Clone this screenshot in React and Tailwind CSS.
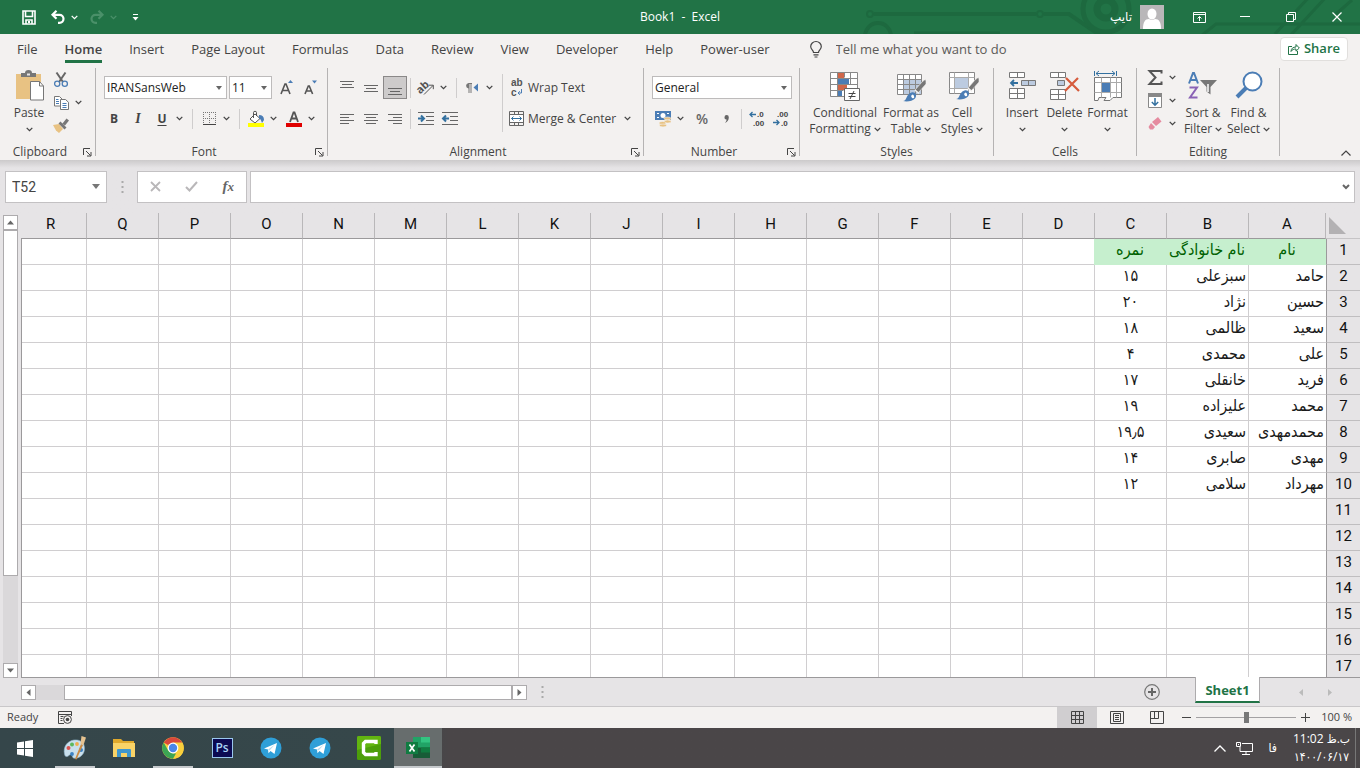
import { useState } from "react";

const TABS = [
  "File",
  "Home",
  "Insert",
  "Page Layout",
  "Formulas",
  "Data",
  "Review",
  "View",
  "Developer",
  "Help",
  "Power-user",
];

const COLUMNS = "ABCDEFGHIJKLMNOPQR".split("");
const ROW_COUNT = 17;

const ROWS = [
  ["نام", "نام خانوادگی", "نمره"],
  ["حامد", "سبزعلی", "۱۵"],
  ["حسین", "نژاد", "۲۰"],
  ["سعید", "ظالمی", "۱۸"],
  ["علی", "محمدی", "۴"],
  ["فرید", "خانقلی", "۱۷"],
  ["محمد", "علیزاده", "۱۹"],
  ["محمدمهدی", "سعیدی", "۱۹٫۵"],
  ["مهدی", "صابری", "۱۴"],
  ["مهرداد", "سلامی", "۱۲"],
];

const Svg = ({ w, h, children, className = "" }) => (
  <svg
    width={w}
    height={h}
    viewBox={`0 0 ${w} ${h}`}
    fill="none"
    className={`shrink-0 overflow-visible ${className}`}
    aria-hidden="true"
  >
    {children}
  </svg>
);

const Chevron = ({ className = "" }) => (
  <Svg w={7} h={5} className={className}>
    <path d="M0.7 0.9 3.5 3.6 6.3 0.9" stroke="currentColor" strokeWidth="1.3" />
  </Svg>
);

const Caret = ({ className = "" }) => (
  <Svg w={6} h={4} className={className}>
    <path d="M0 0h6L3 4z" fill="#666" />
  </Svg>
);

const Tool = ({ label, children, className = "w-6" }) => (
  <button
    type="button"
    aria-label={label}
    className={`flex h-[23px] items-center justify-center ${className}`}
  >
    {children}
  </button>
);

const More = ({ label }) => (
  <Tool label={label} className="w-[11px]">
    <Chevron />
  </Tool>
);

const Divider = ({ className = "mx-[5px]" }) => (
  <span className={`h-5 w-px shrink-0 bg-[#cfcdcd] ${className}`} />
);

const Group = ({ title, launcher, className, children }) => (
  <>
    <section className={`flex shrink-0 flex-col ${className}`}>
      <div className="flex flex-1">{children}</div>
      <div className="flex h-4 items-center">
        <h2 className="flex-1 text-center text-xs leading-4">{title}</h2>
        {launcher && (
          <button type="button" aria-label={`${title} settings`} className="w-[15px]">
            <Svg w={9} h={9} className="mx-auto">
              <path d="M0.500 7V0.500H7M3 3l4.500 4.500M8 4v4H4" stroke="#444" />
            </Svg>
          </button>
        )}
      </div>
    </section>
    <span className="my-1 w-px shrink-0 bg-[#b5b3b3]" />
  </>
);

const BigButton = ({ icon, lines, className, chevronBelow }) => (
  <button
    type="button"
    className={`flex flex-col items-center pt-[6px] text-xs leading-4 whitespace-nowrap ${className}`}
  >
    <span className="flex h-[35px] items-start">{icon}</span>
    <span>{lines[0]}</span>
    {chevronBelow ? (
      <span className="flex h-4 items-center">
        <Chevron />
      </span>
    ) : (
      <span className="flex items-center gap-[3px]">
        {lines[1]}
        <Chevron />
      </span>
    )}
  </button>
);

const Lines = ({ rows }) => (
  <Svg w={14} h={14}>
    {rows.map(([x, y, w]) => (
      <path key={y} d={`M${x} ${y}.5h${w}`} stroke="#666" />
    ))}
  </Svg>
);

const TitleBar = () => (
  <header className="relative grid h-[34px] shrink-0 grid-cols-[1fr_auto_1fr] items-center overflow-hidden bg-[#217346] text-white">
    <svg
      className="absolute top-0 right-0"
      width="510"
      height="34"
      viewBox="0 0 510 34"
      fill="none"
      stroke="#1d693f"
      aria-hidden="true"
    >
      <path d="M24 14h162M194 14h25l32 22" strokeWidth="4" />
      <circle cx="20" cy="14" r="3" strokeWidth="2" />
      <circle cx="190" cy="14" r="3" strokeWidth="2" />
      <circle cx="28" cy="36" r="13" strokeWidth="4" />
      <path d="M64 33h86" strokeWidth="3" />
      <circle cx="256" cy="9" r="23" strokeWidth="5" />
      <circle cx="256" cy="9" r="9" strokeWidth="7" />
      <path d="M351 36l15-12h144M425 34l35-38M440 36l37-40M486 14l16-14" strokeWidth="3" />
    </svg>
    <div className="relative flex items-center pl-[22px]">
      <button type="button" aria-label="Save">
        <Svg w={14} h={15}>
          <path d="M1 1h12v13H1zM3.500 1v5.500h7V1M4 14v-4h6v4" stroke="#fff" strokeWidth="1.600" />
          <path d="M6 11h2v2H6z" fill="#fff" />
        </Svg>
      </button>
      <button type="button" aria-label="Undo" className="ml-[15px] flex items-center gap-[6px]">
        <Svg w={14} h={14}>
          <path d="M5.500 0.800 1.500 4.800l4 4M1.800 4.800h6.700a4 4 0 0 1 0 8H7" stroke="#fff" strokeWidth="2.200" />
        </Svg>
        <Chevron />
      </button>
      <button type="button" aria-label="Redo" className="ml-3 flex items-center gap-[6px] text-[#4a9069]">
        <Svg w={14} h={14}>
          <path d="M8.500 0.800l4 4-4 4M12.200 4.800H5.500a4 4 0 0 0 0 8H7" stroke="#4a9069" strokeWidth="2.200" />
        </Svg>
        <Chevron />
      </button>
      <button type="button" aria-label="Customize toolbar" className="ml-[15px]">
        <Svg w={7} h={7}>
          <path d="M1 0.500h5" stroke="#fff" />
          <path d="M0.500 3h6l-3 3.500z" fill="#fff" />
        </Svg>
      </button>
    </div>
    <h1 className="relative text-xs whitespace-pre">Book1  -  Excel</h1>
    <div className="relative flex items-center justify-end">
      <span className="mr-2 font-['DejaVu_Sans'] text-xs" dir="rtl">
        تایپ
      </span>
      <Svg w={24} h={24} className="mr-3">
        <path d="M0 0h24v24H0z" fill="#b9b7b9" />
        <ellipse cx="12" cy="9" rx="4.500" ry="5.500" fill="#fff" />
        <path d="M3 24c0-7 2-10 6-10q3 2 6 0c4 0 6 3 6 10z" fill="#fff" />
      </Svg>
      <button type="button" aria-label="Ribbon options" className="flex w-[46px] justify-center">
        <Svg w={13} h={11}>
          <path d="M0.500 0.500h12v10H0.500zM0.500 2.500h12M6.500 9V4.500M4.500 6.500l2-2 2 2" stroke="#fff" />
        </Svg>
      </button>
      <button type="button" aria-label="Minimize" className="flex w-[46px] justify-center">
        <Svg w={10} h={10}>
          <path d="M0 4.500h10" stroke="#fff" />
        </Svg>
      </button>
      <button type="button" aria-label="Restore" className="flex w-[46px] justify-center">
        <Svg w={10} h={10}>
          <path d="M0.500 2.500h7v7h-7zM2.500 2.500v-2h7v7h-2" stroke="#fff" />
        </Svg>
      </button>
      <button type="button" aria-label="Close" className="flex w-[46px] justify-center">
        <Svg w={10} h={10}>
          <path d="M0.500 0.500l9 9M9.500 0.500l-9 9" stroke="#fff" strokeWidth="1.200" />
        </Svg>
      </button>
    </div>
  </header>
);

const TabStrip = () => {
  const [active, setActive] = useState("Home");
  return (
    <nav className="flex h-[30px] shrink-0 items-center pr-3 pl-[17px] text-[13px] whitespace-nowrap">
      <div className="flex gap-[27px]">
        {TABS.map((tab) => (
          <button
            key={tab}
            type="button"
            onClick={() => setActive(tab)}
            className={
              tab === active
                ? "border-b-[3px] border-[#217346] pt-[3px] font-semibold leading-[22px]"
                : "border-b-[3px] border-transparent pt-[3px] leading-[22px]"
            }
          >
            {tab}
          </button>
        ))}
      </div>
      <Svg w={12} h={17} className="ml-10">
        <path
          d="M3.500 11.500C3.500 9 0.700 8.500 0.700 5.500a5.300 5 0 0 1 10.600 0c0 3-2.800 3.500-2.800 6zM3.500 13.800h5M4.500 16h3"
          stroke="#444"
          strokeWidth="1.200"
        />
      </Svg>
      <input
        aria-label="Tell me what you want to do"
        placeholder="Tell me what you want to do"
        className="ml-[14px] min-w-0 flex-1 bg-transparent pt-0.5 outline-none placeholder:text-[#5c5a58]"
      />
      <button
        type="button"
        className="flex h-6 items-center gap-1 rounded-sm border border-[#e1dfdd] bg-white px-[7px] font-semibold text-[#217346]"
      >
        <Svg w={12} h={12}>
          <path d="M4 3.500H0.500v8h9V8M3 8.500c0-3 2-4.500 5-4.500V1.500L11.300 5 8 8.200V6C6 6 4 6.500 3 8.500z" stroke="#217346" />
        </Svg>
        Share
      </button>
    </nav>
  );
};

const Dropdown = ({ label, value, className }) => (
  <div className={`relative flex h-[23px] items-center border border-[#bdbbbb] bg-white ${className}`}>
    <select
      aria-label={label}
      className="h-full w-full appearance-none bg-transparent pl-0.5 text-xs text-[#222] outline-none"
    >
      <option>{value}</option>
    </select>
    <Caret className="pointer-events-none absolute right-1" />
  </div>
);

const ClipboardGroup = () => (
  <Group title="Clipboard" launcher className="w-[95px]">
    <BigButton
      className="ml-3 w-[34px]"
      lines={["Paste"]}
      chevronBelow
      icon={
        <Svg w={28} h={31} className="ml-0.5">
          <path d="M0 4h25v25H0z" fill="#e8c283" />
          <path d="M5 7V3h4a3.500 3 0 0 1 7 0h4v4z" fill="#777" />
          <path d="M11 3.500h3v2h-3z" fill="#e8e6e6" />
          <path d="M14.500 11.500h9l4 4.500v14h-13z" fill="#fff" stroke="#777" />
          <path d="M23.500 11.500V16h4" stroke="#777" />
        </Svg>
      }
    />
    <div className="ml-[3px] flex flex-col pt-1">
      <Tool label="Cut">
        <Svg w={14} h={15}>
          <path d="M2.500 0.500l6.500 9.500M11.500 0.500L5 10" stroke="#666" strokeWidth="2" />
          <circle cx="3.200" cy="11.700" r="2.600" stroke="#4b7db5" strokeWidth="1.300" />
          <circle cx="10.800" cy="11.700" r="2.600" stroke="#4b7db5" strokeWidth="1.300" />
        </Svg>
      </Tool>
      <div className="flex">
        <Tool label="Copy">
          <Svg w={15} h={14}>
            <path d="M0.500 0.500h5l2.500 2.500v7H0.500z" fill="#fff" stroke="#777" />
            <path d="M6.500 3.500h5l3 2.800v7.200h-8z" fill="#fff" stroke="#777" />
            <path d="M2 3.500h2.500M2 5.500h3M2 7.500h3M8.500 7.500h4M8.500 9.500h4M8.500 11.500h4" stroke="#4b7db5" />
          </Svg>
        </Tool>
        <More label="Copy options" />
      </div>
      <Tool label="Format painter">
        <Svg w={16} h={15}>
          <path d="M0 7l6-1 4 5-4 4-3-2.500z" fill="#e8c283" />
          <path d="M5.500 5.500l2-2 6 6-2 2zM9.500 5.500l4-5 2.500 2-4 5z" fill="#777" />
        </Svg>
      </Tool>
    </div>
  </Group>
);

const FontGroup = () => (
  <Group title="Font" launcher className="w-[231px]">
    <div className="flex flex-col gap-2 pt-3 pl-1.5">
      <div className="flex pl-0.5">
        <Dropdown label="Font" value="IRANSansWeb" className="w-[123px]" />
        <Dropdown label="Font size" value="11" className="ml-0.5 w-[43px]" />
        <Tool label="Increase font size" className="ml-0.5 w-6">
          <Svg w={13} h={15}>
            <path d="M1 14L5 4h1l4 10M2.500 10.500h6" stroke="#555" strokeWidth="1.600" />
            <path d="M8 3l2.500-3L13 3z" fill="#4b7db5" />
          </Svg>
        </Tool>
        <Tool label="Decrease font size">
          <Svg w={13} h={15}>
            <path d="M1 14L4.300 6h1L8.600 14M2.500 11h4.800" stroke="#555" strokeWidth="1.600" />
            <path d="M8 0.500l2.500 3L13 0.500z" fill="#4b7db5" />
          </Svg>
        </Tool>
      </div>
      <div className="flex items-center">
        <Tool label="Bold">
          <span className="text-xs font-bold">B</span>
        </Tool>
        <Tool label="Italic">
          <span className="font-['Liberation_Serif'] text-sm font-bold italic">I</span>
        </Tool>
        <Tool label="Underline">
          <span className="text-xs font-bold underline underline-offset-2">U</span>
        </Tool>
        <More label="Underline options" />
        <Divider className="mr-1 ml-[7px]" />
        <Tool label="Borders">
          <Svg w={13} h={13}>
            <path d="M0.500 0v12M6.500 0v12M12.500 0v12M0 0.500h13M0 6.500h13" stroke="#777" strokeDasharray="1 1" />
            <path d="M0 12.500h13" stroke="#444" />
          </Svg>
        </Tool>
        <More label="Border options" />
        <Divider className="mr-1 ml-[7px]" />
        <Tool label="Fill color">
          <Svg w={16} h={16}>
            <path d="M2 8l5-5 5 4.500-5 4.500z" fill="#fff" stroke="#555" />
            <path d="M5.500 7V1.500a1.500 1.200 0 0 1 3 0V5" stroke="#555" />
            <path d="M11 4q5 0 5 5l-2 3q-1-4-3-5z" fill="#4b7db5" />
            <path d="M0 12h16v4H0z" fill="#ff0" />
          </Svg>
        </Tool>
        <More label="Fill options" />
        <Tool label="Font color" className="ml-[3px] w-6">
          <Svg w={16} h={16}>
            <path d="M4 11L7.500 1.500h1L12 11M5.300 7.500h5.400" stroke="#555" strokeWidth="1.800" />
            <path d="M0 12h16v4H0z" fill="#e00000" />
          </Svg>
        </Tool>
        <More label="Font color options" />
      </div>
    </div>
  </Group>
);

const AlignmentGroup = () => (
  <Group title="Alignment" launcher className="w-[315px]">
    <div className="flex flex-col gap-2 pt-3 pl-[7px]">
      <div className="flex items-center">
        <Tool label="Top align">
          <Lines rows={[[0, 0, 14], [2, 3, 10], [0, 6, 14]]} />
        </Tool>
        <Tool label="Middle align">
          <Lines rows={[[0, 4, 14], [2, 7, 10], [0, 10, 14]]} />
        </Tool>
        <Tool label="Bottom align" className="w-6 border border-[#8a8888] bg-[#cdcbcb]">
          <Lines rows={[[0, 7, 14], [2, 10, 10], [0, 13, 14]]} />
        </Tool>
        <Divider className="mx-[3px]" />
        <Tool label="Orientation">
          <Svg w={16} h={15}>
            <text x="-1" y="11" fontSize="11" fontWeight="700" fill="#555" transform="rotate(-42 5 9)">
              ab
            </text>
            <path d="M6 14.500l9-9M11 5.200h4.300v4" stroke="#555" />
          </Svg>
        </Tool>
        <More label="Orientation options" />
        <Divider className="mr-[3px] ml-[7px]" />
        <Tool label="Text direction">
          <Svg w={14} h={10}>
            <path d="M6 0H3.500a3 2.800 0 0 0 0 5.500V10h1V1h1v9h1V1H7V0z" fill="#777" />
            <path d="M13 0.500v8L8.500 4.500z" fill="#4b7db5" />
          </Svg>
        </Tool>
        <More label="Text direction options" />
      </div>
      <div className="flex items-center">
        <Tool label="Align left">
          <Lines rows={[[0, 2, 14], [0, 5, 9], [0, 8, 14], [0, 11, 9]]} />
        </Tool>
        <Tool label="Center">
          <Lines rows={[[0, 2, 14], [2, 5, 10], [0, 8, 14], [2, 11, 10]]} />
        </Tool>
        <Tool label="Align right">
          <Lines rows={[[0, 2, 14], [5, 5, 9], [0, 8, 14], [5, 11, 9]]} />
        </Tool>
        <Divider className="mx-[3px]" />
        <Tool label="Increase indent">
          <Svg w={16} h={13}>
            <path d="M0 0.500h16M8 4.500h8M8 8.500h8M0 12.500h16" stroke="#666" />
            <path d="M0 6.500h5M3 3.500l3 3-3 3" stroke="#33709f" strokeWidth="2" />
          </Svg>
        </Tool>
        <Tool label="Decrease indent">
          <Svg w={16} h={13}>
            <path d="M0 0.500h16M8 4.500h8M8 8.500h8M0 12.500h16" stroke="#666" />
            <path d="M7 6.500H2M4 3.500l-3 3 3 3" stroke="#33709f" strokeWidth="2" />
          </Svg>
        </Tool>
      </div>
    </div>
    <span className="mt-2.5 ml-[7px] h-[58px] w-px bg-[#cfcdcd]" />
    <div className="flex flex-col gap-2 pt-3 pl-1.5 text-xs whitespace-nowrap">
      <button type="button" className="flex h-[23px] items-center gap-1">
        <Svg w={15} h={17}>
          <text x="2" y="7" fontSize="10" fontWeight="700" fill="#555" className="font-['Liberation_Sans']">
            ab
          </text>
          <text x="2" y="17" fontSize="10" fontWeight="700" fill="#555" className="font-['Liberation_Sans']">
            c
          </text>
          <path d="M12.500 10v4H9M10.800 12.200L9 14l1.800 1.800" stroke="#4b7db5" />
        </Svg>
        Wrap Text
      </button>
      <div className="flex">
        <button type="button" className="flex h-[23px] items-center gap-1">
          <Svg w={15} h={15}>
            <path d="M0.500 0.500h14v14H0.500zM0.500 3.500h14M0.500 11.500h14M5.500 0.500v3M9.500 0.500v3M5.500 11.500v3M9.500 11.500v3" stroke="#666" />
            <path d="M1 4h13v7H1z" fill="#fff" />
            <path d="M2.500 7.500h10M4.500 5.500l-2 2 2 2M10.500 5.500l2 2-2 2" stroke="#33709f" />
          </Svg>
          Merge &amp; Center
        </button>
        <span className="w-1.5" />
        <More label="Merge options" />
      </div>
    </div>
  </Group>
);

const Decimals = ({ top, bottom, topX, bottomX, arrow }) => (
  <Svg w={15} h={15}>
    <text x={topX} y="6" fontSize="8" fontWeight="600" fill="#444" className="font-['Liberation_Sans']">
      {top}
    </text>
    <text x={bottomX} y="15" fontSize="8" fontWeight="600" fill="#444" className="font-['Liberation_Sans']">
      {bottom}
    </text>
    <path d={arrow} stroke="#33709f" strokeWidth="1.300" />
  </Svg>
);

const NumberGroup = () => (
  <Group title="Number" launcher className="w-[155px]">
    <div className="flex flex-col gap-2 pt-3 pl-[7px]">
      <Dropdown label="Number format" value="General" className="ml-px w-[140px]" />
      <div className="flex items-center">
        <Tool label="Accounting format">
          <Svg w={16} h={16}>
            <path d="M0 0h16v9H0z" fill="#4b7db5" />
            <circle cx="8" cy="4.500" r="2.500" fill="#fff" />
            <path d="M2 2h2v1H2zM12 2h2v1h-2zM2 6h2v1H2z" fill="#fff" />
            <ellipse cx="12.500" cy="7.500" rx="3.500" ry="1.500" fill="#e8c283" stroke="#f3f1f0" strokeWidth=".6" />
            <ellipse cx="12.500" cy="10.500" rx="3.500" ry="1.500" fill="#e8c283" stroke="#f3f1f0" strokeWidth=".6" />
            <ellipse cx="7.500" cy="12" rx="3.500" ry="1.500" fill="#e8c283" stroke="#f3f1f0" strokeWidth=".6" />
            <ellipse cx="8" cy="14.500" rx="3.500" ry="1.400" fill="#e8c283" stroke="#f3f1f0" strokeWidth=".6" />
          </Svg>
        </Tool>
        <More label="Accounting options" />
        <Tool label="Percent style" className="ml-1 w-6">
          <span className="text-sm font-semibold text-[#666]">%</span>
        </Tool>
        <Tool label="Comma style">
          <Svg w={5} h={8}>
            <path d="M0.500 2.200a2.100 2.200 0 0 1 4.300 0C4.800 5 3.500 7 1 8c1-1.200 1.600-2.300 1.500-3.500C1 4.500 0.500 3.500 0.500 2.200z" fill="#666" />
          </Svg>
        </Tool>
        <Divider className="mx-[3px]" />
        <Tool label="Increase decimal">
          <Decimals top=".0" topX={7} bottom=".00" bottomX={3} arrow="M6 3.500H0M2.500 1L0 3.500 2.500 6" />
        </Tool>
        <Tool label="Decrease decimal">
          <Decimals top=".00" topX={3} bottom=".0" bottomX={7} arrow="M-1 11.500h6M2.500 9L5 11.500 2.500 14" />
        </Tool>
      </div>
    </div>
  </Group>
);

const Brush = () => (
  <>
    <path d="M18 17l7-8q3-3 4-2v4l-8 9z" fill="#777" stroke="#f3f1f0" strokeWidth=".6" />
    <path d="M18 17l4 3.500" stroke="#f3f1f0" strokeWidth="1.500" />
    <path d="M6 28c4 0 3-7 8.500-8.500 4-1 6 3 3.500 6-2.500 2.700-8 3.500-12 2.500z" fill="#4b7db5" />
    <path d="M14 23q2-3 3 0t-2 2z" fill="#fff" />
  </>
);

const StylesGroup = () => (
  <Group title="Styles" className="w-[193px]">
    <div className="flex pl-2">
      <BigButton
        className="w-[74px]"
        lines={["Conditional", "Formatting"]}
        icon={
          <Svg w={30} h={31}>
            <path d="M0.500 2.500h27v24h-27z" fill="#fff" />
            <path d="M8 3h6v5H8zM8 15h9v5H8z" fill="#d0674a" />
            <path d="M8 9h11v5H8zM8 21h4v5H8z" fill="#4b7db5" />
            <path d="M0.500 2.500h27v24h-27zM7.500 2.500v24M14.500 2.500v5M20.500 2.500v12M0.500 8.500h27M0.500 14.500h27M0.500 20.500h13" stroke="#888" />
            <path d="M14.500 18.500h15v12h-15z" fill="#fff" stroke="#666" />
            <path d="M18.500 23.500h7M18.500 26.500h7M24 21l-4 8" stroke="#444" />
          </Svg>
        }
      />
      <BigButton
        className="w-[58px]"
        lines={["Format as", "Table"]}
        icon={
          <Svg w={30} h={31}>
            <path d="M1.500 4.500h24v20h-24z" fill="#fff" />
            <path d="M8 9h17v15H8z" fill="#bccbe0" />
            <path d="M1.500 4.500h24v20h-24zM7.500 4.500v20M13.500 4.500v20M19.500 4.500v20M1.500 9.500h24M1.500 14.500h24M1.500 19.500h24" stroke="#888" />
            <g transform="translate(1 3)">
              <Brush />
            </g>
          </Svg>
        }
      />
      <BigButton
        className="w-11"
        lines={["Cell", "Styles"]}
        icon={
          <Svg w={30} h={31} className="ml-1">
            <path d="M0.500 2.500h25v21h-25z" fill="#fff" stroke="#888" />
            <path d="M0.500 7.500h25M0.500 18.500h25M5.500 2.500v21M19.500 2.500v21" stroke="#aaa" />
            <path d="M6 8h13v10H6z" fill="#bccbe0" />
            <g transform="translate(1 1)">
              <Brush />
            </g>
          </Svg>
        }
      />
    </div>
  </Group>
);

const CellsGroup = () => (
  <Group title="Cells" className="w-[142px]">
    <div className="flex pl-[7px]">
      <BigButton
        className="w-[42px]"
        lines={["Insert"]}
        chevronBelow
        icon={
          <Svg w={27} h={30}>
            <path d="M0.500 2.500h15v5h-15zM8.500 2.500v5M0.500 18.500h15v10h-15zM0.500 23.500h15M8.500 18.500v10" fill="#fff" stroke="#777" />
            <path d="M12.500 10.500h14v5h-14zM19.500 10.500v5" fill="#bccbe0" stroke="#777" />
            <path d="M9 13H2M5 10l-3 3 3 3" stroke="#33709f" strokeWidth="1.800" />
          </Svg>
        }
      />
      <BigButton
        className="w-[43px]"
        lines={["Delete"]}
        chevronBelow
        icon={
          <Svg w={29} h={30}>
            <path d="M0.500 2.500h15v5h-15zM8.500 2.500v5M0.500 19.500h15v10h-15zM0.500 24.500h15M8.500 19.500v10" fill="#fff" stroke="#777" />
            <path d="M7.500 10.500h7v5h-7z" fill="#bccbe0" stroke="#777" />
            <path d="M16 8l13 13M28 8L15 21" stroke="#d65b3c" strokeWidth="2.200" />
          </Svg>
        }
      />
      <BigButton
        className="w-[43px]"
        lines={["Format"]}
        chevronBelow
        icon={
          <Svg w={28} h={31}>
            <path d="M0.500 1v5M22.500 1v5M2 3.500h19M5 1L2 3.500 5 6M18 1l3 2.500L18 6" stroke="#33709f" />
            <path d="M0.500 7.500h27v20H19l-3 3H10l2-3H5l-1 3H0.500z" fill="#fff" stroke="#777" />
            <path d="M0.500 12.500h27M0.500 22.500h27M7.500 7.500v20M16.500 7.500v20M22.500 7.500v20" stroke="#aaa" />
            <path d="M8 13h8v9H8z" fill="#4b7db5" />
          </Svg>
        }
      />
    </div>
  </Group>
);

const EditingGroup = () => (
  <Group title="Editing" className="w-[142px]">
    <div className="flex flex-col pt-[2px] pl-1.5">
      <div className="flex">
        <Tool label="AutoSum">
          <Svg w={15} h={15}>
            <path d="M13.500 3.500V1H1.500l6 6.500-6 6.500h12v-2.500" stroke="#555" strokeWidth="2" />
          </Svg>
        </Tool>
        <More label="AutoSum options" />
      </div>
      <div className="flex">
        <Tool label="Fill">
          <Svg w={14} h={15}>
            <path d="M0.500 0.500h13v14h-13z" fill="#fff" stroke="#888" />
            <path d="M0 0h14v4H0z" fill="#888" />
            <path d="M7 5v7M3.800 9L7 12.200 10.200 9" stroke="#33709f" strokeWidth="1.500" />
          </Svg>
        </Tool>
        <More label="Fill options" />
      </div>
      <div className="flex">
        <Tool label="Clear">
          <Svg w={14} h={13}>
            <path d="M4 5l6-5 3.500 4.500L8 9z" fill="#e58b9f" />
            <path d="M3 6l4 4-2 2.500H2L0.500 10z" fill="#e58b9f" />
          </Svg>
        </Tool>
        <More label="Clear options" />
      </div>
    </div>
    <BigButton
      className="w-[50px]"
      lines={["Sort &", "Filter"]}
      icon={
        <Svg w={30} h={30}>
          <path d="M1 13.500L5 3h1l4 10.500M2.700 10h5.600" stroke="#4b7db5" strokeWidth="2" />
          <path d="M1.500 17.500h7.500L2 27.500h7.500" stroke="#8a62b5" strokeWidth="2" />
          <path d="M12 10h17l-6.500 7v7.500l-4-3V17z" fill="#777" />
          <path d="M20 14v8" stroke="#fff" strokeWidth="1.500" />
        </Svg>
      }
    />
    <BigButton
      className="w-[41px]"
      lines={["Find &", "Select"]}
      icon={
        <Svg w={28} h={30}>
          <path d="M2 27l9-9" stroke="#4b7db5" strokeWidth="4" />
          <circle cx="17.500" cy="11.500" r="9" fill="#fff" stroke="#4b7db5" strokeWidth="2" />
        </Svg>
      }
    />
  </Group>
);

const Ribbon = () => (
  <div className="flex h-24 shrink-0">
    <ClipboardGroup />
    <FontGroup />
    <AlignmentGroup />
    <NumberGroup />
    <StylesGroup />
    <CellsGroup />
    <EditingGroup />
    <button type="button" aria-label="Collapse ribbon" className="mt-auto mr-[9px] mb-1 ml-auto">
      <Svg w={10} h={6}>
        <path d="M0.500 5.500l4.500-4.500 4.500 4.500" stroke="#444" strokeWidth="1.200" />
      </Svg>
    </button>
  </div>
);

const Grip = () => (
  <Svg w={3} h={12}>
    <path d="M0.500 1h2M0.500 6h2M0.500 11h2" stroke="#aaa" strokeWidth="2" />
  </Svg>
);

const FormulaBar = () => (
  <div className="flex h-[53px] shrink-0 items-center bg-linear-to-b from-[#cccacb] to-[#e6e4e6] to-15% px-[5px]">
    <div className="flex h-8 w-[102px] items-center border border-[#c3c1c3] bg-white pr-1.5 pl-1.5">
      <input
        aria-label="Name box"
        defaultValue="T52"
        className="min-w-0 flex-1 font-[Roboto] text-sm text-[#444] outline-none"
      />
      <Svg w={8} h={5}>
        <path d="M0 0h8L4 5z" fill="#777" />
      </Svg>
    </div>
    <div className="flex w-[30px] justify-center">
      <Grip />
    </div>
    <div className="flex h-8 w-[110px] items-center justify-around border border-[#c3c1c3] bg-white">
      <button type="button" aria-label="Cancel">
        <Svg w={11} h={11}>
          <path d="M1 1l9 9M10 1l-9 9" stroke="#b9b7b9" strokeWidth="1.800" />
        </Svg>
      </button>
      <button type="button" aria-label="Enter">
        <Svg w={13} h={11}>
          <path d="M1 6l3.500 3.500L12 1" stroke="#b9b7b9" strokeWidth="2" />
        </Svg>
      </button>
      <button type="button" className="font-['Liberation_Serif'] text-[15px] font-bold text-[#666] italic">
        f<span className="text-[13px]">x</span>
      </button>
    </div>
    <div className="ml-[3px] flex h-8 flex-1 items-center border border-[#c3c1c3] bg-white pr-1">
      <input aria-label="Formula" className="min-w-0 flex-1 px-2 text-sm outline-none" />
      <Svg w={8} h={6}>
        <path d="M1 1l3 3 3-3" stroke="#666" strokeWidth="2" />
      </Svg>
    </div>
  </div>
);

const ScrollArrow = ({ label, d }) => (
  <button
    type="button"
    aria-label={label}
    className="flex size-[15px] shrink-0 items-center justify-center border border-[#adabad] bg-white"
  >
    <Svg w={7} h={7}>
      <path d={d} fill="#666" />
    </Svg>
  </button>
);

const cellClass = (row, col) => {
  if (row === 0 && col < 3) return "bg-[#c6efce] text-center text-[#006100]";
  const base = "border-b border-l border-[#d0ced0] bg-white text-[#1a1a1a]";
  return col === 2 ? `${base} text-center` : base;
};

const Sheet = () => (
  <main className="flex min-h-0 flex-1 bg-[#e6e4e6]">
    <div className="flex w-[21px] shrink-0 flex-col pt-[2px] pl-[3px]">
      <ScrollArrow label="Scroll up" d="M0 5.500h7L3.500 1.500z" />
      <div className="flex w-[15px] flex-1 flex-col bg-[#dad8da]">
        <div className="h-4/5 border border-[#adabad] bg-white" />
      </div>
      <ScrollArrow label="Scroll down" d="M0 1.500h7L3.500 5.500z" />
    </div>
    <div dir="rtl" className="relative min-w-0 flex-1 overflow-hidden border-b border-[#9b999b]">
      <table className="w-[1346px] min-w-full table-fixed border-separate border-spacing-0">
        <colgroup>
          <col className="w-[34px]" />
          {COLUMNS.map((c) => (
            <col key={c} className={c === "A" ? "w-[78px]" : c === "B" ? "w-[82px]" : "w-[72px]"} />
          ))}
        </colgroup>
        <thead>
          <tr className="h-[26px] font-[Roboto] text-[15px] leading-5 text-[#111]">
            <th className="border-b border-[#c6c4c6] p-0">
              <Svg w={17} h={17} className="mr-auto ml-[3px]">
                <path d="M0 0v17h17z" fill="#b3b1b3" />
              </Svg>
            </th>
            {COLUMNS.map((c, i) => (
              <th
                key={c}
                scope="col"
                className={
                  i === 0
                    ? "border-x border-b border-x-[#b9b7b9] border-b-[#9b999b] p-0 pb-1 font-normal"
                    : "border-b border-l border-b-[#9b999b] border-l-[#b9b7b9] p-0 pb-1 font-normal"
                }
              >
                {c}
              </th>
            ))}
          </tr>
        </thead>
        <tbody>
          {Array.from({ length: ROW_COUNT }, (_, r) => (
            <tr key={r} className="h-[26px]">
              <th
                scope="row"
                className="border-b border-l border-b-[#c0bec0] border-l-[#9b999b] p-0 pb-1 font-[Roboto] text-[15px] leading-5 font-normal text-[#111]"
              >
                {r + 1}
              </th>
              {COLUMNS.map((c, i) => (
                <td
                  key={c}
                  className={`px-0.5 pt-0 pb-1 font-['DejaVu_Sans_Condensed','DejaVu_Sans',sans-serif] text-base leading-5 whitespace-nowrap ${cellClass(r, i)}`}
                >
                  {ROWS[r]?.[i]}
                </td>
              ))}
            </tr>
          ))}
        </tbody>
      </table>
      <span className="absolute top-[26px] bottom-0 left-0 w-px bg-[#9b999b]" />
    </div>
  </main>
);

const SheetTabs = () => (
  <div className="flex h-7 shrink-0 items-center bg-[#e6e4e6] pr-7 pl-[21px]">
    <ScrollArrow label="Scroll left" d="M5.500 0v7L1.500 3.500z" />
    <div className="flex h-[15px] w-[476px] bg-[#dad8da] pl-7">
      <div className="flex-1 border border-[#adabad] bg-white" />
    </div>
    <ScrollArrow label="Scroll right" d="M1.500 0v7L5.500 3.500z" />
    <span className="ml-[14px]">
      <Grip />
    </span>
    <button type="button" aria-label="New sheet" className="mr-[35px] ml-auto">
      <Svg w={16} h={16}>
        <circle cx="8" cy="8" r="7.300" stroke="#777" strokeWidth="1.200" />
        <path d="M8 4v8M4 8h8" stroke="#666" strokeWidth="2" />
      </Svg>
    </button>
    <button
      type="button"
      className="relative -top-px h-[26px] w-[65px] self-start border-x border-b-2 border-x-[#adabad] border-b-[#217346] bg-white pt-1 text-[13px] font-bold text-[#217346]"
    >
      Sheet1
    </button>
    <button type="button" aria-label="Previous sheet" className="ml-[39px]">
      <Svg w={4} h={7}>
        <path d="M4 0v7L0 3.500z" fill="#bbb" />
      </Svg>
    </button>
    <button type="button" aria-label="Next sheet" className="ml-[25px]">
      <Svg w={4} h={7}>
        <path d="M0 0v7l4-3.500z" fill="#bbb" />
      </Svg>
    </button>
  </div>
);

const StatusBar = () => {
  const [zoom, setZoom] = useState(100);
  return (
    <footer className="flex h-[22px] shrink-0 items-center border-t border-[#c9c7c9] pr-2 pl-[7px] text-[11px]">
      <span>Ready</span>
      <button type="button" aria-label="Record macro" className="ml-5">
        <Svg w={14} h={13}>
          <path d="M6 12.500H0.500v-12h13V5M0.500 3.500h13M2.500 5.500h3M2.500 7.500h2M2.500 9.500h2" stroke="#444" />
          <circle cx="9.500" cy="8.500" r="3.900" stroke="#444" />
          <circle cx="9.500" cy="8.500" r="1.800" fill="#444" />
        </Svg>
      </button>
      <button
        type="button"
        aria-label="Normal view"
        className="ml-auto flex h-full w-10 items-center justify-center bg-[#d0ced0]"
      >
        <Svg w={13} h={13}>
          <path d="M0.500 0.500h12v12h-12zM4.500 0.500v12M8.500 0.500v12M0.500 4.500h12M0.500 8.500h12" stroke="#444" />
        </Svg>
      </button>
      <button type="button" aria-label="Page layout view" className="flex w-10 justify-center">
        <Svg w={14} h={13}>
          <path d="M0.500 0.500h13v12h-13zM3.500 2.500h7v8h-7zM5 4.500h4M5 6.500h4M5 8.500h4" stroke="#444" />
        </Svg>
      </button>
      <button type="button" aria-label="Page break view" className="flex w-10 justify-center">
        <Svg w={14} h={13}>
          <path d="M0.500 0.500h13v12h-13zM4.500 0.500v7M8.500 0.500v7M0.500 7.500h8" stroke="#444" />
        </Svg>
      </button>
      <button type="button" aria-label="Zoom out" className="ml-[5px]" onClick={() => setZoom(Math.max(10, zoom - 10))}>
        <Svg w={9} h={9}>
          <path d="M0 4.500h9" stroke="#444" />
        </Svg>
      </button>
      <input
        type="range"
        aria-label="Zoom"
        min="10"
        max="190"
        value={zoom}
        onChange={(e) => setZoom(Number(e.target.value))}
        className="mx-[5px] h-3 w-[100px] appearance-none bg-transparent [&::-webkit-slider-runnable-track]:h-px [&::-webkit-slider-runnable-track]:bg-[#a3a1a3] [&::-webkit-slider-thumb]:-mt-[5px] [&::-webkit-slider-thumb]:h-[11px] [&::-webkit-slider-thumb]:w-[5px] [&::-webkit-slider-thumb]:appearance-none [&::-webkit-slider-thumb]:bg-[#777]"
      />
      <button type="button" aria-label="Zoom in" onClick={() => setZoom(Math.min(190, zoom + 10))}>
        <Svg w={9} h={9}>
          <path d="M0 4.500h9M4.500 0v9" stroke="#444" />
        </Svg>
      </button>
      <span className="w-[42px] text-right">{zoom} %</span>
    </footer>
  );
};

const Telegram = () => (
  <Svg w={22} h={22}>
    <circle cx="11" cy="11" r="10.500" fill="#2f9fd8" />
    <path d="M4 11.500L17 6l-2.500 11-4-3-2 2.200-.5-3.700z" fill="#fff" />
    <path d="M8 12.500L15 7.500l-5.500 6z" fill="#b8dcee" />
  </Svg>
);

const APPS = [
  {
    name: "Start",
    icon: (
      <Svg w={16} h={17}>
        <path d="M0 2.500l7-1V8H0zM8 1.300L16 0v8H8zM0 9h7v6.500l-7-1zM8 9h8v8l-8-1.300z" fill="#fff" />
      </Svg>
    ),
  },
  {
    name: "Paint",
    open: true,
    icon: (
      <Svg w={24} h={24}>
        <path d="M11 4C4 5 0 11 1.500 18c.7 4 3.500 2.500 5 1s2.500 0 3 2c1 3 12 1 12-8.500C21.500 6 17 3.500 11 4z" fill="#c9dfec" stroke="#8fb3c9" strokeWidth=".6" />
        <circle cx="5.500" cy="12" r="2" fill="#d9534f" />
        <circle cx="9" cy="8.500" r="2" fill="#5cb85c" />
        <circle cx="14" cy="8" r="1.900" fill="#f0ad4e" />
        <circle cx="9" cy="18" r="1.900" fill="#3b82c4" />
        <circle cx="18" cy="14" r="2" fill="#3b82c4" />
        <path d="M12 23l6-15 2 1-6.500 14.500z" fill="#c98b45" />
        <path d="M17.500 8l1-8 4.500 1.500L20.500 9z" fill="#e5c290" />
      </Svg>
    ),
  },
  {
    name: "File Explorer",
    icon: (
      <Svg w={22} h={20}>
        <path d="M0 1h8l2 2h11v16H0z" fill="#e0a92c" />
        <path d="M0 5h22v14H0z" fill="#f9d367" />
        <path d="M4 19v-7q0-1 1-1h12q1 0 1 1v7h-4v-4H8v4z" fill="#3f97cf" />
      </Svg>
    ),
  },
  {
    name: "Chrome",
    open: true,
    icon: (
      <Svg w={22} h={22}>
        <circle cx="11" cy="11" r="10.800" fill="#f9cf3c" />
        <path d="M11 11L1.700 5.500A10.800 10.800 0 0 1 20.300 5.600z" fill="#d9483b" />
        <path d="M11 5.600h9.300l-5 8z" fill="#d9483b" />
        <path d="M11 5.600h9.300A10.800 10.800 0 0 1 11 21.800l4.600-8z" fill="#f9cf3c" />
        <path d="M1.700 5.500L6.300 13.700 11 16.400h3L11 21.800A10.800 10.800 0 0 1 1.700 5.500z" fill="#3ca554" />
        <circle cx="11" cy="11" r="5.400" fill="#fff" />
        <circle cx="11" cy="11" r="4.200" fill="#4a86e8" />
      </Svg>
    ),
  },
  {
    name: "Photoshop",
    icon: (
      <span className="flex h-5 w-[21px] items-center justify-center border border-[#9ac7ee] bg-[#0c0a52] text-xs leading-none font-semibold text-[#a9d4f5]">
        Ps
      </span>
    ),
  },
  { name: "Telegram", icon: <Telegram /> },
  { name: "Telegram 2", icon: <Telegram /> },
  {
    name: "Camtasia",
    icon: (
      <Svg w={24} h={24}>
        <rect width="24" height="24" rx="1.500" fill="#4c9e0a" />
        <path d="M0 1.500Q0 0 1.500 0h21Q24 0 24 1.500V8L0 14z" fill="#62b510" />
        <path d="M19 8V5.500H8.500L6.500 7.500v9l2 2H19V16" stroke="#fff" strokeWidth="3.400" />
      </Svg>
    ),
  },
  {
    name: "Excel",
    open: true,
    active: true,
    icon: (
      <Svg w={24} h={22}>
        <path d="M7 0h17v21H7z" fill="#21a366" />
        <path d="M15 0h9v5.500h-9z" fill="#33c481" />
        <path d="M7 10.500h17V21H7z" fill="#185c37" />
        <path d="M15 10.500h9v5h-9z" fill="#107c41" />
        <path d="M0 5h12v12H0z" fill="#107c41" />
        <path d="M3.500 7.500l5 7M8.500 7.500l-5 7" stroke="#fff" strokeWidth="1.700" />
      </Svg>
    ),
  },
];

const Taskbar = () => (
  <footer className="flex h-10 shrink-0 items-center bg-linear-to-r from-[#35464a] via-[#36474a] via-29% to-[#4a4648] to-33% text-white">
    <div className="flex h-full gap-px">
      {APPS.map((app) => (
        <button
          key={app.name}
          type="button"
          aria-label={app.name}
          className={`relative flex w-12 items-center justify-center first:w-[50px] ${app.active ? "bg-[#676d6d]" : ""}`}
        >
          {app.icon}
          {app.open && (
            <span className={`absolute bottom-0 h-0.5 bg-[#c5c9cc] ${app.active ? "w-12" : "w-10"}`} />
          )}
        </button>
      ))}
    </div>
    <div className="ml-auto flex h-full items-center font-['Open_Sans','DejaVu_Sans_Condensed','DejaVu_Sans',sans-serif] text-xs">
      <button type="button" aria-label="Show hidden icons">
        <Svg w={12} h={7}>
          <path d="M0.500 6.500L6 1l5.500 5.500" stroke="#fff" strokeWidth="1.300" />
        </Svg>
      </button>
      <button type="button" aria-label="Network" className="ml-2.5">
        <Svg w={17} h={13}>
          <path d="M6 1.500h10.500v8H4V5M10 9.500v3M6 12.500h8M0.500 0.500h4v4h-4zM2 2.500h1" stroke="#fff" />
        </Svg>
      </button>
      <button type="button" className="ml-4">
        فا
      </button>
      <div dir="rtl" className="mr-[5px] ml-4 text-center leading-[18px] whitespace-nowrap">
        <div>ب.ظ 11:02</div>
        <div>۱۴۰۰/۰۶/۱۷</div>
      </div>
      <button type="button" aria-label="Show desktop" className="h-full w-[5px] border-l border-[#777]" />
    </div>
  </footer>
);

const App = () => (
  <div className="flex h-screen min-h-[480px] flex-col overflow-hidden bg-[#f3f1f0] font-['Open_Sans','Noto_Sans','DejaVu_Sans',sans-serif] text-[#444]">
    <TitleBar />
    <TabStrip />
    <Ribbon />
    <FormulaBar />
    <Sheet />
    <SheetTabs />
    <StatusBar />
    <Taskbar />
  </div>
);

export default App;
